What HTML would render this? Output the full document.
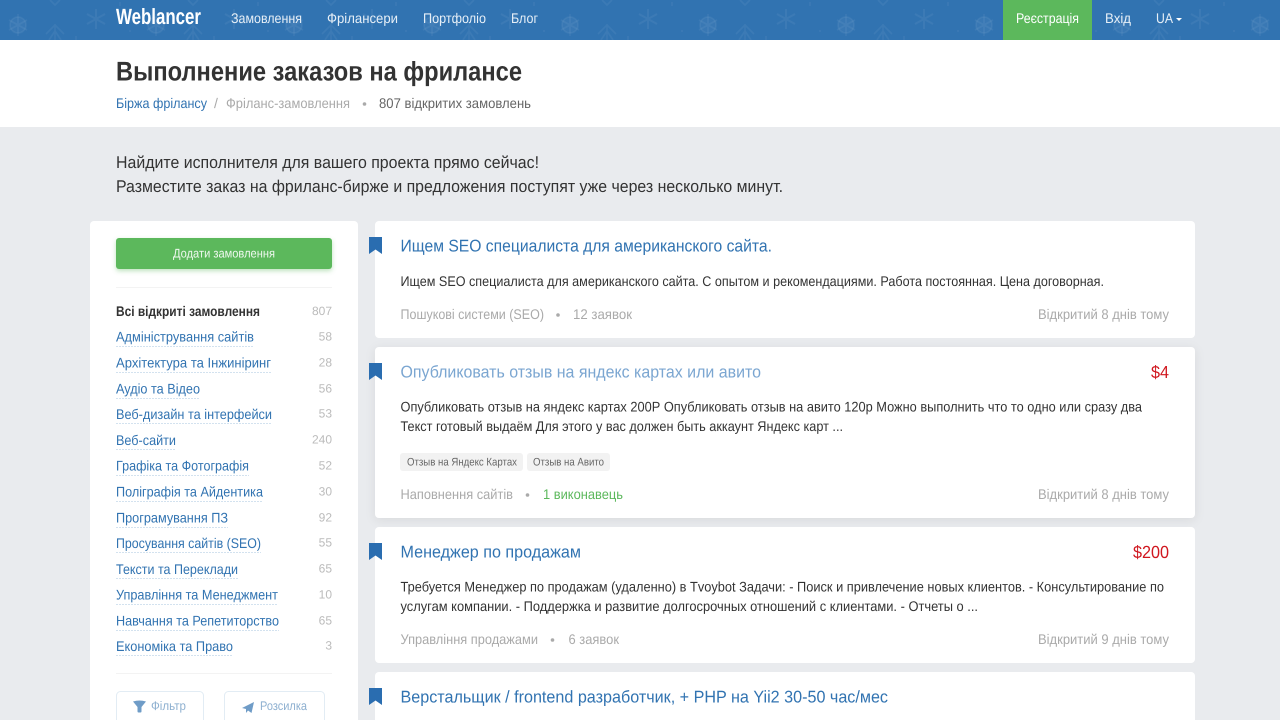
<!DOCTYPE html>
<html lang="uk"><head><meta charset="utf-8"><title>Weblancer</title>
<style>
html,body{margin:0;padding:0;width:1280px;height:720px;overflow:hidden;background:#e9ebee}
svg{position:absolute;left:0;top:0;display:block}
text{font-family:"Liberation Sans",sans-serif;font-size:14px;fill:#333;text-rendering:geometricPrecision}
.nav{font-size:14px;fill:#e6eff7}
.link{fill:#3173b1}
.side{font-size:14px;fill:#3173b1}
.cnt{font-size:12px;fill:#bbb}
.title{font-size:17px;fill:#3173b1}
.desc{font-size:14px;fill:#333}
.meta{font-size:14px;fill:#aaa}
.price{font-size:17.5px;fill:#d0171f}
.tag{font-size:11px;fill:#666}
.intro{font-size:17px;fill:#333}
</style></head><body>
<svg width="1280" height="720" viewBox="0 0 1280 720" xmlns="http://www.w3.org/2000/svg">
<defs>
<pattern id="sn" x="0" y="0" width="138" height="40" patternUnits="userSpaceOnUse">
<g fill="none" stroke="#fff" stroke-opacity=".05" stroke-width="1.6">
<circle cx="18" cy="25" r="8" fill="#fff" fill-opacity=".04"/>
<path d="M18 14v22M9 20l18 10M27 20L9 30"/>
<path d="M96 9v20M87 14l18 10M105 14L87 24" stroke-width="2"/>
<path d="M46 34l9-9 9 9M49 40l6-9 6 9M55 24v16"/>
<path d="M50 0l5 5 5-5M120 2v4M76 36v4M130 30v2"/>
</g>
</pattern>
<path id="bm" d="M0 0h13v17l-6.500-4.500L0 17z" fill="#2a6db0"/>
<filter id="sh" x="-5%" y="-15%" width="110%" height="130%"><feDropShadow dx="0" dy="2" stdDeviation="5" flood-color="#000" flood-opacity=".08"/></filter>
<filter id="gs" x="-5%" y="-20%" width="110%" height="160%"><feDropShadow dx="0" dy="2" stdDeviation="2.500" flood-color="#5cb85c" flood-opacity=".4"/></filter>
</defs>

<!-- header -->
<rect width="1280" height="40" fill="#3173b1"/>
<rect width="1280" height="40" fill="url(#sn)"/>
<rect x="1003" y="0" width="89" height="40" fill="#5cb85c"/>
<text x="116" y="24" textLength="85" lengthAdjust="spacingAndGlyphs" style="font-size:22px;font-weight:700;fill:#fff">Weblancer</text>
<text class="nav" x="231" y="23" textLength="71" lengthAdjust="spacingAndGlyphs">Замовлення</text>
<text class="nav" x="327" y="23" textLength="71" lengthAdjust="spacingAndGlyphs">Фрілансери</text>
<text class="nav" x="423" y="23" textLength="63" lengthAdjust="spacingAndGlyphs">Портфоліо</text>
<text class="nav" x="511" y="23" textLength="27" lengthAdjust="spacingAndGlyphs">Блог</text>
<text class="nav" x="1016" y="23" textLength="63" lengthAdjust="spacingAndGlyphs" style="fill:#fff">Реєстрація</text>
<text class="nav" x="1105" y="23" textLength="26" lengthAdjust="spacingAndGlyphs">Вхід</text>
<text class="nav" x="1156" y="23" textLength="17" lengthAdjust="spacingAndGlyphs">UA</text>
<path d="M1176 18h6l-3 3z" fill="#fff"/>

<!-- title block -->
<rect y="40" width="1280" height="87" fill="#fff"/>
<text x="116" y="80.500" textLength="406" lengthAdjust="spacingAndGlyphs" style="font-size:27px;font-weight:700;fill:#333">Выполнение заказов на фрилансе</text>
<text class="link" x="116" y="108" textLength="91" lengthAdjust="spacingAndGlyphs">Біржа фрілансу</text>
<text x="214" y="108" style="fill:#aaa">/</text>
<text x="226" y="108" textLength="124" lengthAdjust="spacingAndGlyphs" style="fill:#aaa">Фріланс-замовлення</text>
<circle cx="364.500" cy="104" r="1.800" fill="#aaa"/>
<text x="379" y="108" textLength="152" lengthAdjust="spacingAndGlyphs" style="fill:#666">807 відкритих замовлень</text>

<!-- intro -->
<text class="intro" x="116" y="168" textLength="423" lengthAdjust="spacingAndGlyphs">Найдите исполнителя для вашего проекта прямо сейчас!</text>
<text class="intro" x="116" y="192" textLength="667" lengthAdjust="spacingAndGlyphs">Разместите заказ на фриланс-бирже и предложения поступят уже через несколько минут.</text>

<!-- sidebar -->
<rect x="90" y="221" width="268" height="520" rx="4" fill="#fff"/>
<rect x="116" y="238" width="216" height="31" rx="3" fill="#5cb85c" filter="url(#gs)"/>
<text x="173" y="257.500" textLength="102" lengthAdjust="spacingAndGlyphs" style="font-size:12.500px;fill:#eef8ee">Додати замовлення</text>
<rect x="116" y="287" width="216" height="1" fill="#f3f3f3"/>
<text x="116" y="316" textLength="144" lengthAdjust="spacingAndGlyphs" style="font-weight:700;fill:#333">Всі відкриті замовлення</text>
<text class="cnt" x="332" y="315" text-anchor="end">807</text>

<g stroke="#d3e2ef" stroke-width="1" stroke-dasharray="2 1" fill="none">
<path d="M116 346.500h138M116 372.500h155M116 398.500h84M116 423.500h156M116 449.500h60M116 475.500h133M116 501.500h147M116 527.500h112M116 552.500h145M116 578.500h122M116 604.500h162M116 630.500h163M116 655.500h117"/>
</g>
<g transform="translate(0,-.6)">
<text class="side" x="116" y="342" textLength="138" lengthAdjust="spacingAndGlyphs">Адміністрування сайтів</text><text class="cnt" x="332" y="341" text-anchor="end">58</text>
<text class="side" x="116" y="368" textLength="155" lengthAdjust="spacingAndGlyphs">Архітектура та Інжиніринг</text><text class="cnt" x="332" y="367" text-anchor="end">28</text>
<text class="side" x="116" y="394" textLength="84" lengthAdjust="spacingAndGlyphs">Аудіо та Відео</text><text class="cnt" x="332" y="393" text-anchor="end">56</text>
<text class="side" x="116" y="419.500" textLength="156" lengthAdjust="spacingAndGlyphs">Веб-дизайн та інтерфейси</text><text class="cnt" x="332" y="418" text-anchor="end">53</text>
<text class="side" x="116" y="445.500" textLength="60" lengthAdjust="spacingAndGlyphs">Веб-сайти</text><text class="cnt" x="332" y="444" text-anchor="end">240</text>
<text class="side" x="116" y="471" textLength="133" lengthAdjust="spacingAndGlyphs">Графіка та Фотографія</text><text class="cnt" x="332" y="470" text-anchor="end">52</text>
<text class="side" x="116" y="497" textLength="147" lengthAdjust="spacingAndGlyphs">Поліграфія та Айдентика</text><text class="cnt" x="332" y="496" text-anchor="end">30</text>
<text class="side" x="116" y="523" textLength="112" lengthAdjust="spacingAndGlyphs">Програмування ПЗ</text><text class="cnt" x="332" y="522" text-anchor="end">92</text>
<text class="side" x="116" y="548.500" textLength="145" lengthAdjust="spacingAndGlyphs">Просування сайтів (SEO)</text><text class="cnt" x="332" y="547" text-anchor="end">55</text>
<text class="side" x="116" y="574.500" textLength="122" lengthAdjust="spacingAndGlyphs">Тексти та Переклади</text><text class="cnt" x="332" y="573" text-anchor="end">65</text>
<text class="side" x="116" y="600" textLength="162" lengthAdjust="spacingAndGlyphs">Управління та Менеджмент</text><text class="cnt" x="332" y="599" text-anchor="end">10</text>
<text class="side" x="116" y="626" textLength="163" lengthAdjust="spacingAndGlyphs">Навчання та Репетиторство</text><text class="cnt" x="332" y="625" text-anchor="end">65</text>
<text class="side" x="116" y="651.500" textLength="117" lengthAdjust="spacingAndGlyphs">Економіка та Право</text><text class="cnt" x="332" y="650" text-anchor="end">3</text>
</g>
<rect x="116" y="673" width="216" height="1" fill="#f3f3f3"/>

<rect x="116.500" y="691.500" width="87" height="40" rx="4" fill="#fff" stroke="#e2ecf4"/>
<rect x="224.500" y="691.500" width="100" height="40" rx="4" fill="#fff" stroke="#e2ecf4"/>
<path d="M133 701.500q6.500-2 13 0l-4.500 5.500v4.500q0 1-1 1h-2q-1 0-1-1v-4.500z" fill="#6f9cc7"/>
<path d="M242 708l12-6-2.500 11-3.500-2.500-2 2.500v-4z" fill="#6f9cc7"/>
<text x="151" y="710" textLength="35" lengthAdjust="spacingAndGlyphs" style="font-size:12.500px;fill:#8eb0d0">Фільтр</text>
<text x="260" y="710" textLength="47" lengthAdjust="spacingAndGlyphs" style="font-size:12.500px;fill:#8eb0d0">Розсилка</text>

<!-- card 1 -->
<rect x="375" y="221" width="820" height="117" rx="4" fill="#fff"/>
<use href="#bm" x="369" y="237"/>
<text class="title" x="400.500" y="251.500" textLength="371.500" lengthAdjust="spacingAndGlyphs">Ищем SEO специалиста для американского сайта.</text>
<text class="desc" x="400.500" y="286" textLength="703.500" lengthAdjust="spacingAndGlyphs">Ищем SEO специалиста для американского сайта. С опытом и рекомендациями. Работа постоянная. Цена договорная.</text>
<text class="meta" x="400.500" y="319" textLength="143.500" lengthAdjust="spacingAndGlyphs">Пошукові системи (SEO)</text>
<circle cx="558" cy="315" r="1.800" fill="#aaa"/>
<text class="meta" x="573" y="319" textLength="59" lengthAdjust="spacingAndGlyphs">12 заявок</text>
<text class="meta" x="1038" y="319" textLength="131" lengthAdjust="spacingAndGlyphs">Відкритий 8 днів тому</text>

<!-- card 2 -->
<rect x="375" y="347" width="820" height="171" rx="4" fill="#fff" filter="url(#sh)"/>
<use href="#bm" x="369" y="363"/>
<text class="title" x="400.500" y="377.500" textLength="360.500" lengthAdjust="spacingAndGlyphs" style="fill:#7ba6d1">Опубликовать отзыв на яндекс картах или авито</text>
<text class="price" x="1151" y="378" textLength="18" lengthAdjust="spacingAndGlyphs">$4</text>
<text class="desc" x="400.500" y="411.500" textLength="741.500" lengthAdjust="spacingAndGlyphs">Опубликовать отзыв на яндекс картах 200Р Опубликовать отзыв на авито 120р Можно выполнить что то одно или сразу два</text>
<text class="desc" x="400.500" y="431" textLength="442.500" lengthAdjust="spacingAndGlyphs">Текст готовый выдаём Для этого у вас должен быть аккаунт Яндекс карт ...</text>
<rect x="400" y="453" width="123" height="18" rx="3" fill="#f2f2f2"/>
<rect x="527" y="453" width="83" height="18" rx="3" fill="#f2f2f2"/>
<text class="tag" x="407" y="465.500" textLength="110" lengthAdjust="spacingAndGlyphs">Отзыв на Яндекс Картах</text>
<text class="tag" x="533" y="465.500" textLength="71" lengthAdjust="spacingAndGlyphs">Отзыв на Авито</text>
<text class="meta" x="400.500" y="499" textLength="112.500" lengthAdjust="spacingAndGlyphs">Наповнення сайтів</text>
<circle cx="527.500" cy="495" r="1.800" fill="#aaa"/>
<text class="meta" x="543" y="499" textLength="80" lengthAdjust="spacingAndGlyphs" style="fill:#5cb85c">1 виконавець</text>
<text class="meta" x="1038" y="499" textLength="131" lengthAdjust="spacingAndGlyphs">Відкритий 8 днів тому</text>

<!-- card 3 -->
<rect x="375" y="527" width="820" height="136" rx="4" fill="#fff"/>
<use href="#bm" x="369" y="543"/>
<text class="title" x="400.500" y="557.500" textLength="180.500" lengthAdjust="spacingAndGlyphs">Менеджер по продажам</text>
<text class="price" x="1133" y="558" textLength="36" lengthAdjust="spacingAndGlyphs">$200</text>
<text class="desc" x="400.500" y="591.500" textLength="763.500" lengthAdjust="spacingAndGlyphs">Требуется Менеджер по продажам (удаленно) в Tvoybot Задачи: - Поиск и привлечение новых клиентов. - Консультирование по</text>
<text class="desc" x="400.500" y="611" textLength="577.500" lengthAdjust="spacingAndGlyphs">услугам компании. - Поддержка и развитие долгосрочных отношений с клиентами. - Отчеты о ...</text>
<text class="meta" x="400.500" y="644" textLength="137.500" lengthAdjust="spacingAndGlyphs">Управління продажами</text>
<circle cx="552.500" cy="640" r="1.800" fill="#aaa"/>
<text class="meta" x="568.500" y="644" textLength="50.500" lengthAdjust="spacingAndGlyphs">6 заявок</text>
<text class="meta" x="1038" y="644" textLength="131" lengthAdjust="spacingAndGlyphs">Відкритий 9 днів тому</text>

<!-- card 4 -->
<rect x="375" y="672" width="820" height="80" rx="4" fill="#fff"/>
<use href="#bm" x="369" y="688"/>
<text class="title" x="400.500" y="702.500" textLength="487.500" lengthAdjust="spacingAndGlyphs">Верстальщик / frontend разработчик, + PHP на Yii2 30-50 час/мес</text>
</svg>
</body></html>
